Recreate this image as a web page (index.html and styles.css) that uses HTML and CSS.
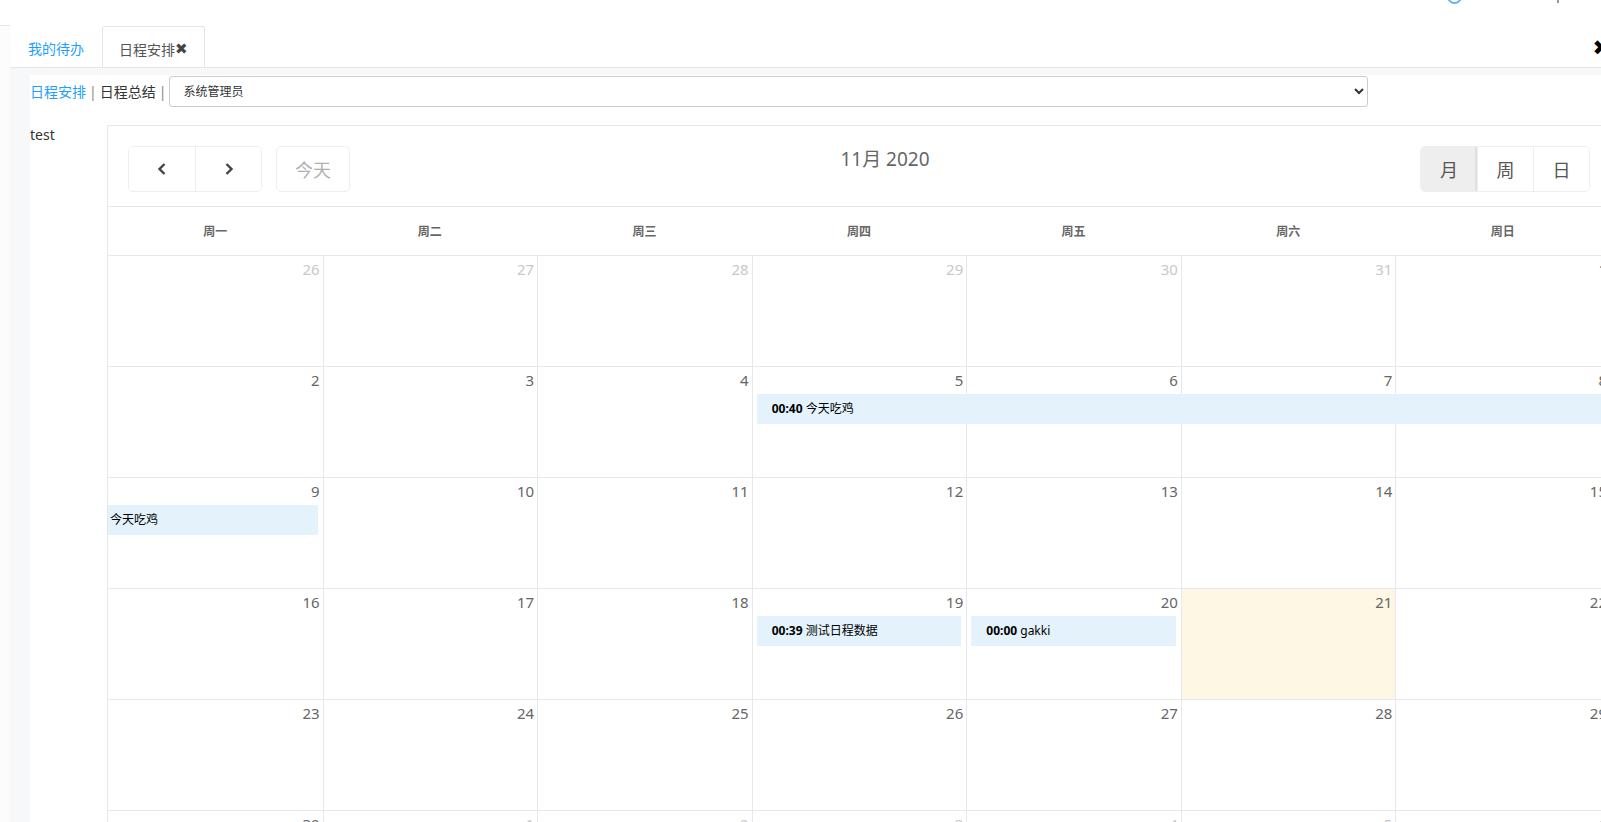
FILE: index.html
```html
<!DOCTYPE html>
<html lang="zh-CN">
<head>
    <meta charset="UTF-8">
    <meta name="viewport" content="width=device-width, initial-scale=1.0">
    <title>日程安排</title>
    <link rel="stylesheet" href="styles.css">
</head>
<body>

<div class="app">
    <div class="side"><div class="side-top"></div></div>

    <div class="main">
        <div class="topbar">
            <span class="top-icon"></span>
            <span class="top-mark"></span>
        </div>

        <div class="tabs">
            <span class="tab">我的待办</span>
            <span class="tab active">日程安排<i class="tab-x">✖</i></span>
            <span class="close-all">✖</span>
        </div>

        <div class="content">
            <div class="panel">
                <div class="nav">
                    <a class="nav-link current">日程安排</a>
                    <span class="sep">|</span>
                    <a class="nav-link">日程总结</a>
                    <span class="sep">|</span>
                    <select class="user-select">
                        <option>系统管理员</option>
                    </select>
                </div>

                <div class="sched">
                    <div class="user">test</div>

                    <div class="cal">
                        <div class="toolbar">
                            <div class="chunk">
                                <div class="btn-group">
                                    <button class="btn">
                                        <svg width="12" height="14" viewBox="0 0 12 14"><polyline points="8.5,2 3.5,7 8.5,12" fill="none" stroke="#444" stroke-width="2.4"/></svg>
                                    </button>
                                    <button class="btn">
                                        <svg width="12" height="14" viewBox="0 0 12 14"><polyline points="3.5,2 8.5,7 3.5,12" fill="none" stroke="#444" stroke-width="2.4"/></svg>
                                    </button>
                                </div>
                                <button class="btn btn-today" disabled>今天</button>
                            </div>
                            <h2 class="cal-title">11月 2020</h2>
                            <div class="btn-group views">
                                <button class="btn active">月</button>
                                <button class="btn">周</button>
                                <button class="btn">日</button>
                            </div>
                        </div>

                        <div class="dow">
                            <span>周一</span><span>周二</span><span>周三</span><span>周四</span><span>周五</span><span>周六</span><span>周日</span>
                        </div>

                        <div class="week">
                            <div class="cells">
                                <div class="day other">26</div>
                                <div class="day other">27</div>
                                <div class="day other">28</div>
                                <div class="day other">29</div>
                                <div class="day other">30</div>
                                <div class="day other">31</div>
                                <div class="day">1</div>
                            </div>
                        </div>

                        <div class="week">
                            <div class="cells">
                                <div class="day">2</div>
                                <div class="day">3</div>
                                <div class="day">4</div>
                                <div class="day">5</div>
                                <div class="day">6</div>
                                <div class="day">7</div>
                                <div class="day">8</div>
                            </div>
                            <div class="evs">
                                <div class="ev open-end" style="grid-column: 4 / 8"><b>00:40</b> 今天吃鸡</div>
                            </div>
                        </div>

                        <div class="week">
                            <div class="cells">
                                <div class="day">9</div>
                                <div class="day">10</div>
                                <div class="day">11</div>
                                <div class="day">12</div>
                                <div class="day">13</div>
                                <div class="day">14</div>
                                <div class="day">15</div>
                            </div>
                            <div class="evs">
                                <div class="ev cont" style="grid-column: 1 / 2">今天吃鸡</div>
                            </div>
                        </div>

                        <div class="week">
                            <div class="cells">
                                <div class="day">16</div>
                                <div class="day">17</div>
                                <div class="day">18</div>
                                <div class="day">19</div>
                                <div class="day">20</div>
                                <div class="day today">21</div>
                                <div class="day">22</div>
                            </div>
                            <div class="evs">
                                <div class="ev" style="grid-column: 4 / 5"><b>00:39</b> 测试日程数据</div>
                                <div class="ev" style="grid-column: 5 / 6"><b>00:00</b> gakki</div>
                            </div>
                        </div>

                        <div class="week">
                            <div class="cells">
                                <div class="day">23</div>
                                <div class="day">24</div>
                                <div class="day">25</div>
                                <div class="day">26</div>
                                <div class="day">27</div>
                                <div class="day">28</div>
                                <div class="day">29</div>
                            </div>
                        </div>

                        <div class="week">
                            <div class="cells">
                                <div class="day">30</div>
                                <div class="day other">1</div>
                                <div class="day other">2</div>
                                <div class="day other">3</div>
                                <div class="day other">4</div>
                                <div class="day other">5</div>
                                <div class="day other">6</div>
                            </div>
                        </div>
                    </div>
                </div>
            </div>
        </div>
    </div>
</div>

</body>
</html>
```

FILE: styles.css
```css
html, body {
    margin: 0;
    height: 100%;
    overflow: hidden;
}
body {
    font-family: "Noto Sans", "Noto Sans CJK SC", sans-serif;
    font-size: 14px;
    color: #333;
    background: #fff;
}
.app {
    display: flex;
    height: 100vh;
}
.side {
    width: 10px;
    flex: none;
    background: #fcfcfd;
}
.side-top {
    height: 25px;
    background: #fff;
    border-bottom: 1px solid #e6e6e6;
}
.main {
    flex: 1;
    min-width: 0;
    display: flex;
    flex-direction: column;
}
.topbar {
    flex: none;
    height: 25px;
    display: flex;
    justify-content: flex-end;
    align-items: flex-start;
}
.top-icon {
    width: 11px;
    height: 11px;
    border: 2px solid #5fb4f5;
    border-radius: 50%;
    margin-top: -11px;
    margin-right: 95px;
}
.top-mark {
    width: 2px;
    height: 3px;
    background: #999;
    margin-right: 42px;
}
.tabs {
    flex: none;
    height: 42px;
    display: flex;
    align-items: flex-end;
    border-bottom: 1px solid #e6e6e6;
    background: #fff;
}
.tab {
    height: 41px;
    box-sizing: border-box;
    padding: 3px 18px 0;
    display: flex;
    align-items: center;
    color: #1e9fff;
    cursor: pointer;
}
.tab.active {
    color: #555;
    padding: 3px 16px 0;
    border: 1px solid #e6e6e6;
    border-bottom: none;
    border-radius: 3px 3px 0 0;
}
.tab-x {
    font-style: normal;
    font-family: "DejaVu Sans", sans-serif;
    font-size: 15px;
    color: #444;
}
.close-all {
    margin-left: auto;
    margin-right: -9px;
    align-self: center;
    margin-top: 4px;
    font-family: "DejaVu Sans", sans-serif;
    font-size: 21px;
    color: #000;
}
.content {
    flex: 1;
    min-height: 0;
    background: #f7f8fa;
    padding: 7px 0 0 20px;
}
.panel {
    background: #fff;
    height: 100%;
}
.nav {
    display: flex;
    align-items: center;
    padding-top: 1px;
    height: 31px;
}
.nav-link {
    color: #333;
    cursor: pointer;
    line-height: 20px;
}
.nav-link.current {
    color: #1e9fff;
}
.sep {
    margin: 0 3px;
    color: #888;
    line-height: 20px;
}
.user-select {
    width: 1199px;
    height: 31px;
    border: 1px solid #ccc;
    border-radius: 3px;
    background: #fff;
    font-family: "Noto Sans", "Noto Sans CJK SC", sans-serif;
    font-size: 12px;
    color: #333;
    padding-left: 9px;
}
.sched {
    display: flex;
    margin-top: 18px;
}
.user {
    width: 77px;
    flex: none;
    line-height: 20px;
}
.cal {
    flex: none;
    width: 1504px;
    border: 1px solid #e8e8e8;
    box-sizing: border-box;
}
.toolbar {
    display: flex;
    justify-content: space-between;
    align-items: flex-start;
    padding: 20px 20px 14px;
}
.chunk {
    display: flex;
}
.btn-group {
    display: flex;
    border: 1px solid #eee;
    border-radius: 5px;
    overflow: hidden;
}
.btn {
    height: 44px;
    width: 66px;
    border: none;
    background: #fff;
    font-family: "Noto Sans", "Noto Sans CJK SC", sans-serif;
    font-size: 18px;
    color: #555;
    display: flex;
    align-items: center;
    justify-content: center;
    padding: 0;
    cursor: pointer;
}
.btn-group .btn + .btn {
    border-left: 1px solid #eee;
}
.btn-today {
    margin-left: 14px;
    width: 74px;
    height: 46px;
    border: 1px solid #eee;
    border-radius: 5px;
    color: #b0b0b0;
    cursor: default;
}
.views .btn {
    width: 56px;
}
.views .btn.active {
    background: #eee;
    box-shadow: inset -2px 0 0 #e0e0e0;
}
.cal-title {
    margin: 0;
    font-size: 19px;
    font-weight: normal;
    color: #666;
    line-height: 27px;
}
.dow {
    display: grid;
    grid-template-columns: repeat(7, 1fr);
    height: 48px;
    border-top: 1px solid #e8e8e8;
    align-items: center;
    text-align: center;
    font-size: 12px;
    font-weight: bold;
    color: #666;
}
.week {
    display: grid;
    height: 111px;
    box-sizing: border-box;
    border-top: 1px solid #e8e8e8;
}
.cells, .evs {
    grid-area: 1 / 1;
    display: grid;
    grid-template-columns: repeat(7, 1fr);
}
.evs {
    grid-template-rows: 27px 30px;
    align-content: start;
}
.day {
    text-align: right;
    padding: 2px 3px 0 0;
    font-size: 15px;
    line-height: 22px;
    color: #666;
}
.day + .day {
    border-left: 1px solid #e8e8e8;
}
.day.other {
    color: #c8c8c8;
}
.day.today {
    background: #fdf7e3;
}
.ev {
    grid-row: 2;
    margin: 0 5px;
    padding-left: 15px;
    background: #e4f2fc;
    font-size: 12px;
    line-height: 30px;
    color: #000;
    white-space: nowrap;
    overflow: hidden;
}
.ev.open-end {
    margin-right: 0;
}
.ev.cont {
    margin-left: 0;
    padding-left: 2px;
}
```
